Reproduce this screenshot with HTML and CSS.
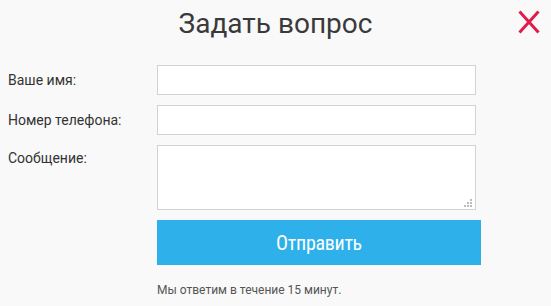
FILE: index.html
```html
<!DOCTYPE html>
<html lang="ru">
<head>
  <meta charset="UTF-8" />
  <meta name="viewport" content="width=device-width, initial-scale=1" />
  <title>Задать вопрос</title>
  <link rel="stylesheet" href="styles.css">
</head>
<body>
  <div class="modal">
    <header class="modal-head">
      <h2>Задать вопрос</h2>
      <a href="#" class="close" aria-label="Закрыть">
        <svg width="22" height="24" viewBox="0 0 22 24">
          <path d="M1.5 1.5 L20.5 22.5 M20.5 1.5 L1.5 22.5" stroke="#e31a4c" stroke-width="3" fill="none" />
        </svg>
      </a>
    </header>

    <form class="ask-form">
      <div class="row">
        <label for="name">Ваше имя:</label>
        <input type="text" id="name" />
      </div>
      <div class="row">
        <label for="phone">Номер телефона:</label>
        <input type="text" id="phone" />
      </div>
      <div class="row row-top">
        <label for="msg">Сообщение:</label>
        <div class="area-wrap">
          <textarea id="msg"></textarea>
          <!-- resize grip -->
          <svg class="grip" width="8" height="8" viewBox="0 0 8 8" fill="#bdbdbd">
            <rect x="6" y="0" width="2" height="2" />
            <rect x="3" y="3" width="2" height="2" />
            <rect x="6" y="3" width="2" height="2" />
            <rect x="0" y="6" width="2" height="2" />
            <rect x="3" y="6" width="2" height="2" />
            <rect x="6" y="6" width="2" height="2" />
          </svg>
        </div>
      </div>
      <div class="row">
        <span></span>
        <button type="submit">Отправить</button>
      </div>
      <div class="row">
        <span></span>
        <p class="note">Мы ответим в течение 15 минут.</p>
      </div>
    </form>
  </div>
</body>
</html>
```

FILE: styles.css
```css
html, body {
  margin: 0;
  background: #f9f9f9;
}
body {
  font-family: Roboto, "Noto Sans", sans-serif;
  color: #333;
}
.modal {
  position: relative;
  width: 551px;
  height: 306px;
}
.modal-head {
  padding-top: 9px;
  text-align: center;
}
.modal-head h2 {
  margin: 0;
  font-size: 28px;
  font-weight: 400;
  line-height: 30px;
  color: #3a3a3a;
}
.close {
  position: absolute;
  top: 10px;
  right: 11px;
  display: block;
  width: 22px;
  height: 24px;
}
.close svg {
  display: block;
}
.ask-form {
  margin-top: 26px;
  padding-left: 8px;
  display: flex;
  flex-direction: column;
  gap: 10px;
}
.row {
  display: grid;
  grid-template-columns: 149px auto;
  align-items: center;
}
.row-top {
  align-items: start;
}
.row label {
  font-size: 14px;
  color: #333;
}
.row-top label {
  padding-top: 5px;
}
input, textarea {
  box-sizing: border-box;
  width: 319px;
  margin: 0;
  border: 1px solid #d3d3d3;
  background: #fff;
  font-family: inherit;
  font-size: 14px;
  padding: 4px 8px;
  outline: none;
}
input {
  height: 30px;
}
.area-wrap {
  position: relative;
  width: 319px;
}
textarea {
  height: 65px;
  resize: none;
  display: block;
}
.grip {
  position: absolute;
  right: 4px;
  bottom: 3px;
}
button {
  width: 324px;
  height: 45px;
  border: none;
  background: #2eb0ea;
  color: #fff;
  font-family: "Roboto Condensed", Roboto, sans-serif;
  font-stretch: 85%;
  font-size: 20px;
  letter-spacing: -0.3px;
  cursor: pointer;
}
.note {
  margin: 7px 0 0;
  font-size: 12px;
  line-height: 16px;
  color: #555;
}
```
